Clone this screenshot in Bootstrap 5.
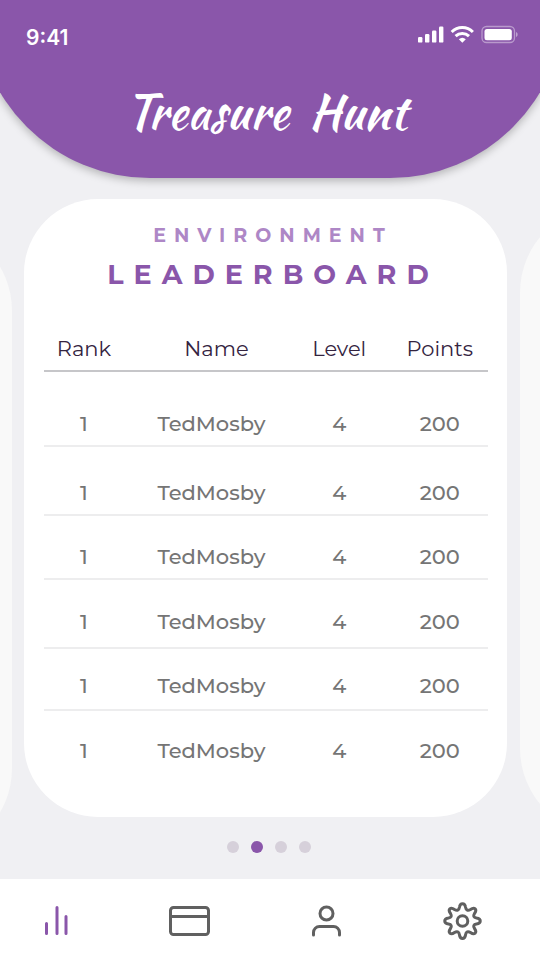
<!DOCTYPE html>
<html lang="en">
<head>
<meta charset="utf-8">
<meta name="viewport" content="width=device-width, initial-scale=1">
<title>Treasure Hunt – Leaderboard</title>
<link href="https://cdn.jsdelivr.net/npm/bootstrap@5.3.0/dist/css/bootstrap.min.css" rel="stylesheet">
<style>
  :root { --plum: #8a56aa; --plum-soft: #ae87c6; --page: #f0f0f3; --ink: #34243f; --muted: #757575; }
  body { background: var(--page); font-family: Montserrat, Inter, "Open Sans", sans-serif; overflow-x: hidden; }
  .hero { background: var(--plum); margin: 0 -24px; padding: 24px 46px 0 48px; min-height: 178px;
    border-radius: 0 0 174px 174px; box-shadow: 0 3px 8px rgba(0, 0, 0, .25); }
  .clock { font: 600 21px/28px Inter, sans-serif; margin-left: 2px; }
  .brand { font: 400 48px/56px "Kaushan Script", "Dancing Script", "Liberation Serif", cursive; gap: 20px; margin-top: 32px; padding-right: 10px; }
  .deck { padding-left: 24px; margin-top: 21px; }
  .panel, .peek { flex: 0 0 calc(100% - 33px); }
  .panel { background: #fff; border-radius: 74px; padding: 25px 19px 43px 20px; }
  .peek { background: #f9f9f9; border-radius: 88px; }
  .peek-prev { margin: 24px 12px -39px calc(33px - 100% - 12px); }
  .peek-next { margin: 6px 0 -19px 13px; }
  .topic, .heading { padding-left: 14px; font-weight: 700; }
  .topic { font-size: 19px; line-height: 24px; letter-spacing: 8px; color: var(--plum-soft); }
  .heading { font-size: 27px; line-height: 32px; letter-spacing: 10px; color: var(--plum); margin-top: 11px; }
  .scores { table-layout: fixed; width: 100%; margin-top: 44px; font-size: 21px; font-weight: 500; line-height: 28px; color: var(--muted); text-align: center; }
  .scores th { font-weight: 400; color: var(--ink); padding: 0 0 7px; text-align: center; }
  .scores thead tr { border-bottom: 2px solid #c6c6c9; }
  .scores td { vertical-align: bottom; padding: 0 0 7px; }
  .scores tbody tr { height: 69px; border-bottom: 2px solid #ededee; }
  .scores tbody tr.first { height: 75px; }
  .scores tbody tr.tight { height: 64px; }
  .scores tbody tr.raised td { padding-bottom: 11px; }
  .scores tbody tr.short { height: 62px; }
  .scores tbody tr.short td { padding-bottom: 9px; }
  .scores tbody tr:last-child { border-bottom: 0; }
  .scores tbody tr.short:last-child td { padding-bottom: 7px; }
  .scores th:nth-child(2) { padding-left: 12px; }
  .scores td:nth-child(2) { padding-left: 2px; }
  .scores th:last-child, .scores td:last-child { padding-left: 10px; }
  .col-rank { width: 18%; } .col-name { width: 39%; } .col-level { width: 19%; } .col-points { width: 24%; }
  .dots { gap: 12px; height: 62px; padding: 0 3px 2px 0; }
  .panel { padding-bottom: 45px; }
  .pager { width: 12px; height: 12px; border-radius: 50%; border: 0; padding: 0; background: #d6d0da; }
  .pager.current { background: var(--plum); }
  .tabs { background: #fff; height: 81px; padding: 3px 58px 0 44px; color: #606060; }
  .tabs a { color: inherit; } .tabs a.current { color: var(--plum); }
  .tabs svg, .status svg { display: block; }
</style>
<script src="https://cdn.jsdelivr.net/npm/bootstrap@5.3.0/dist/js/bootstrap.bundle.min.js"></script>
</head>
<body>
<div class="d-flex flex-column min-vh-100 overflow-hidden">
  <header class="hero text-white position-relative">
    <div class="status d-flex justify-content-between align-items-start">
      <time class="clock">9:41</time>
      <svg width="102" height="20" viewBox="416 24 102 20" fill="#fff" aria-label="Signal, Wi-Fi and battery" role="img">
        <rect x="418" y="37" width="4.4" height="5.6" rx="1.2"/><rect x="425" y="34" width="4.4" height="8.6" rx="1.2"/>
        <rect x="432" y="30.500" width="4.400" height="12.100" rx="1.200"/><rect x="439" y="26.500" width="4.400" height="16.100" rx="1.200"/>
        <g fill="none" stroke="#fff" stroke-width="3"><path d="M451.700 32a15 15 0 0 1 21.200 0"/><path d="M455.600 36.200a9.700 9.700 0 0 1 13.400 0"/></g>
        <path d="M458.800 39.300a5.200 5.200 0 0 1 7 0L462.300 42.800z"/>
        <rect x="482" y="26.500" width="32.500" height="16" rx="4.500" fill="none" stroke="#fff" stroke-opacity=".4" stroke-width="1.300"/>
        <rect x="484.500" y="29" width="27.300" height="11.200" rx="2.500"/><path d="M516 32v5c2.200-.8 2.200-4.200 0-5z" opacity=".45"/>
      </svg>
    </div>
    <h1 class="brand d-flex justify-content-center mb-0"><span>Treasure</span> <span>Hunt</span></h1>
  </header>

  <main class="flex-grow-1">
    <div class="deck d-flex">
      <div class="peek peek-prev"></div>
      <section class="panel">
        <h2 class="topic text-center mb-0">ENVIRONMENT</h2>
        <h3 class="heading text-center mb-0">LEADERBOARD</h3>
        <table class="scores">
          <colgroup><col class="col-rank"><col class="col-name"><col class="col-level"><col class="col-points"></colgroup>
          <thead><tr><th scope="col">Rank</th><th scope="col">Name</th><th scope="col">Level</th><th scope="col">Points</th></tr></thead>
          <tbody>
            <tr class="first"><td>1</td><td>TedMosby</td><td>4</td><td>200</td></tr>
            <tr><td>1</td><td>TedMosby</td><td>4</td><td>200</td></tr>
            <tr class="tight"><td>1</td><td>TedMosby</td><td>4</td><td>200</td></tr>
            <tr class="raised"><td>1</td><td>TedMosby</td><td>4</td><td>200</td></tr>
            <tr class="short"><td>1</td><td>TedMosby</td><td>4</td><td>200</td></tr>
            <tr class="short"><td>1</td><td>TedMosby</td><td>4</td><td>200</td></tr>
          </tbody>
        </table>
      </section>
      <div class="peek peek-next"></div>
    </div>
    <div class="dots d-flex justify-content-center align-items-center position-relative">
      <button class="pager" type="button" aria-label="Page 1"></button>
      <button class="pager current" type="button" aria-label="Page 2"></button>
      <button class="pager" type="button" aria-label="Page 3"></button>
      <button class="pager" type="button" aria-label="Page 4"></button>
    </div>
  </main>

  <nav class="tabs d-flex justify-content-between align-items-center position-relative" aria-label="Main">
    <a class="current" href="#" aria-label="Leaderboard"><svg width="24" height="32" viewBox="0 0 24 32" fill="none" stroke="currentColor" stroke-width="3" stroke-linecap="round"><path d="M2.500 18.500v10M13 2.500v26M22 11.500v17"/></svg></a>
    <a href="#" aria-label="Cards"><svg width="41" height="32" viewBox="0 0 41 32" fill="none" stroke="currentColor" stroke-width="3"><rect x="1.500" y="2.500" width="38" height="27" rx="3"/><path d="M1.500 11.500h38"/></svg></a>
    <a href="#" aria-label="Profile"><svg width="31" height="32" viewBox="0 0 31 32" fill="none" stroke="currentColor" stroke-width="3" stroke-linecap="round"><circle cx="15.500" cy="8.500" r="6.500"/><path d="M2.500 30v-2.500a6 6 0 0 1 6-6h14a6 6 0 0 1 6 6V30"/></svg></a>
    <a href="#" aria-label="Settings"><svg width="39" height="38" viewBox="-19.500 -19 39 38" fill="none" stroke="currentColor" stroke-width="3" stroke-linejoin="round"><circle r="5.300"/>
      <path d="M-3-14C-2.500-18.500 2.500-18.500 3-14C3.500-10.500 5.500-10 8-11.500C12-14.500 15-11.500 12-7.500C10.500-5 11-3.500 14-3C19-2.500 19 2.500 14 3C11 3.500 10.500 5 12 7.500C15 11.500 12 14.500 8 11.500C5.500 10 3.500 10.500 3 14C2.500 18.500-2.500 18.500-3 14C-3.500 10.500-5.500 10-8 11.500C-12 14.500-15 11.500-12 7.500C-10.500 5-11 3.500-14 3C-19 2.500-19-2.500-14-3C-11-3.500-10.500-5-12-7.500C-15-11.500-12-14.500-8-11.500C-5.500-10-3.500-10.500-3-14Z"/></svg></a>
  </nav>
</div>
</body>
</html>
